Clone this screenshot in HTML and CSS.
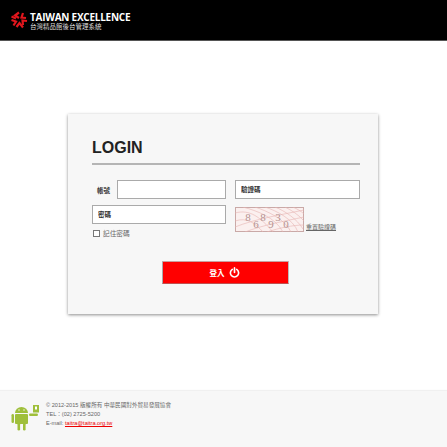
FILE: index.html
```html
<!DOCTYPE html>
<html lang="zh-Hant">
<head>
  <meta charset="UTF-8" />
  <title>Taiwan Excellence Login</title>
  <link rel="stylesheet" href="styles.css">
</head>
<body>
  <header class="top-bar">
    <svg class="logo" width="18" height="18" viewBox="0 0 18 18">
      <g fill="none" stroke="#e0161d" stroke-width="2.2">
        <path d="M9 1.5 L5 4.5 L9 7"/>
        <path d="M13 2 L11.5 6.5 L16 7"/>
        <path d="M17 10 L12.5 9.5 L13 14"/>
        <path d="M13 16.5 L9.5 12 L6.5 16"/>
        <path d="M3.5 14.5 L6 10.5 L1.5 9"/>
        <path d="M1.5 5.5 L6 7.5"/>
      </g>
    </svg>
    <div class="brand">
      <div class="brand-name">TAIWAN EXCELLENCE</div>
      <div class="brand-sub">台灣精品館後台管理系統</div>
    </div>
  </header>

  <main class="page">
    <section class="card">
      <h1>LOGIN</h1>
      <div class="fields">
        <div class="account-row">
          <label>帳號</label>
          <input type="text" />
        </div>
        <input type="text" placeholder="驗證碼" />
        <input type="text" placeholder="密碼" />
        <div class="captcha-row">
          <svg class="captcha" width="69" height="25" viewBox="0 0 69 25">
            <rect x="0.5" y="0.5" width="68" height="24" fill="#fbf0ef" stroke="#c9a9a7"/>
            <g fill="none" stroke="#e6b4b2" stroke-width="0.6">
              <path d="M0 6 C15 2 25 10 38 25"/>
              <path d="M0 14 C12 10 20 16 28 25"/>
              <path d="M8 0 C22 4 40 10 48 25"/>
              <path d="M20 0 C32 4 50 12 56 25"/>
              <path d="M30 0 C42 4 58 12 63 25"/>
              <path d="M40 0 C50 4 62 12 68 22"/>
              <path d="M50 0 C56 3 64 8 69 14"/>
              <path d="M58 0 C62 2 66 4 69 7"/>
              <path d="M0 20 C20 12 45 8 69 3"/>
              <path d="M10 25 C28 18 50 14 69 10"/>
              <path d="M32 25 C44 21 58 18 69 18"/>
            </g>
            <g class="captcha-digits">
              <text x="13" y="14">8</text>
              <text x="28" y="14">8</text>
              <text x="43" y="14">3</text>
              <text x="21" y="21">6</text>
              <text x="36" y="21">9</text>
              <text x="51" y="21">0</text>
            </g>
          </svg>
          <a class="refresh" href="#">重置驗證碼</a>
        </div>
      </div>
      <label class="remember"><span class="box"></span>記住密碼</label>
      <button class="login-btn">登入
        <svg width="11" height="11" viewBox="0 0 12 12" fill="none" stroke="#fff" stroke-width="1.8" stroke-linecap="round">
          <path d="M3.6 2.6 A4.5 4.5 0 1 0 8.4 2.6"/>
          <path d="M6 1 V6"/>
        </svg>
      </button>
    </section>
  </main>

  <footer class="footer">
    <svg class="android" width="29" height="27" viewBox="0 0 29 27">
      <g fill="#9fbf3b">
        <path d="M4 9 A6.5 6 0 0 1 17 9 Z"/>
        <rect x="4" y="10" width="13" height="10" rx="1"/>
        <rect x="0.5" y="10" width="2.5" height="9" rx="1.2"/>
        <rect x="18" y="9.5" width="9" height="2.4" rx="1.2"/>
        <rect x="6.5" y="19" width="2.6" height="7.5" rx="1.3"/>
        <rect x="12" y="19" width="2.6" height="7.5" rx="1.3"/>
        <rect x="22" y="1" width="6" height="7.5"/>
      </g>
      <circle cx="8" cy="6" r="0.7" fill="#fff"/>
      <circle cx="13" cy="6" r="0.7" fill="#fff"/>
      <rect x="24" y="2.5" width="2" height="3" fill="#fff"/>
    </svg>
    <div class="footer-text">
      <div>© 2012-2015 版權所有 中華民國對外貿易發展協會</div>
      <div>TEL：(02) 2725-5200</div>
      <div>E-mail: <a href="#">taitra@taitra.org.tw</a></div>
    </div>
  </footer>
</body>
</html>
```

FILE: styles.css
```css
* {
  box-sizing: border-box;
}
html, body {
  height: 100%;
}
body {
  margin: 0;
  display: flex;
  flex-direction: column;
  background: #fff;
  font-family: "Liberation Sans", "Noto Sans CJK TC", sans-serif;
  overflow: hidden;
}
.top-bar {
  height: 41px;
  flex: none;
  background: #000;
  border-bottom: 1px solid #555;
  display: flex;
  align-items: flex-start;
  padding: 11px 0 0 10px;
  gap: 2px;
}
.brand {
  color: #fff;
}
.brand-name {
  font-family: "Open Sans", sans-serif;
  font-size: 10px;
  font-weight: 700;
  letter-spacing: -0.25px;
  line-height: 12px;
  white-space: nowrap;
}
.brand-sub {
  font-size: 6.5px;
  line-height: 8px;
  color: #ddd;
}
.page {
  flex: 1;
  padding: 73px 69px 0 68px;
}
.card {
  height: 200px;
  background: #f7f7f7;
  box-shadow: 0 1px 3px rgba(0, 0, 0, 0.45);
  padding: 24px 18px 0 24px;
}
h1 {
  margin: 0;
  font-size: 16px;
  font-weight: 700;
  line-height: 19px;
  color: #222;
  padding-bottom: 6px;
  border-bottom: 2px solid #b5b5b5;
}
.fields {
  display: grid;
  grid-template-columns: 134px 125px;
  column-gap: 9px;
  row-gap: 6px;
  margin-top: 15px;
}
input {
  width: 100%;
  height: 19px;
  border: 1px solid #aaa;
  background: #fff;
  padding: 0 5px;
  font-family: inherit;
  font-size: 6.5px;
  font-weight: 700;
  color: #333;
  outline: none;
}
input::placeholder {
  color: #333;
  opacity: 1;
}
.account-row {
  display: flex;
  align-items: center;
  justify-content: space-between;
  padding-left: 5px;
}
.account-row label {
  font-size: 6.5px;
  font-weight: 700;
  color: #333;
}
.account-row input {
  width: 109px;
}
.captcha-row {
  display: flex;
  align-items: flex-end;
  gap: 2px;
  height: 19px;
  padding-top: 2px;
}
.captcha {
  flex: none;
  margin-bottom: -8px;
}
.captcha-digits {
  font-family: "Liberation Serif", serif;
  font-size: 11px;
  fill: #b59391;
  text-anchor: middle;
}
.refresh {
  font-size: 6px;
  color: #666;
  white-space: nowrap;
  margin-bottom: -7px;
}
.remember {
  display: flex;
  align-items: center;
  gap: 3px;
  margin-top: 5px;
  font-size: 6.7px;
  line-height: 9px;
  color: #666;
}
.box {
  width: 7px;
  height: 7px;
  border: 1px solid #777;
  background: #fff;
  margin-left: 1px;
}
.login-btn {
  display: flex;
  align-items: center;
  justify-content: center;
  gap: 4px;
  width: 127px;
  height: 23px;
  margin: 23px 0 0 70px;
  background: #f00;
  border: 0;
  border-top: 1px solid #c9a0a0;
  border-left: 1px solid #aaa;
  border-right: 1px solid #bbb;
  border-bottom: 1px solid #c05050;
  border-radius: 1px;
  color: #fff;
  font-family: inherit;
  font-size: 7.5px;
  font-weight: 700;
  padding: 0 2px 0 0;
}
.footer {
  height: 56px;
  flex: none;
  background: #f7f7f7;
  box-shadow: 0 -1px 1px rgba(0, 0, 0, 0.06);
  display: flex;
  align-items: flex-start;
  padding: 13px 0 0 11px;
  gap: 6px;
  font-size: 5.6px;
  line-height: 9px;
  color: #666;
}
.footer-text {
  margin-top: -3px;
}
.footer a {
  color: #e00;
}
```
